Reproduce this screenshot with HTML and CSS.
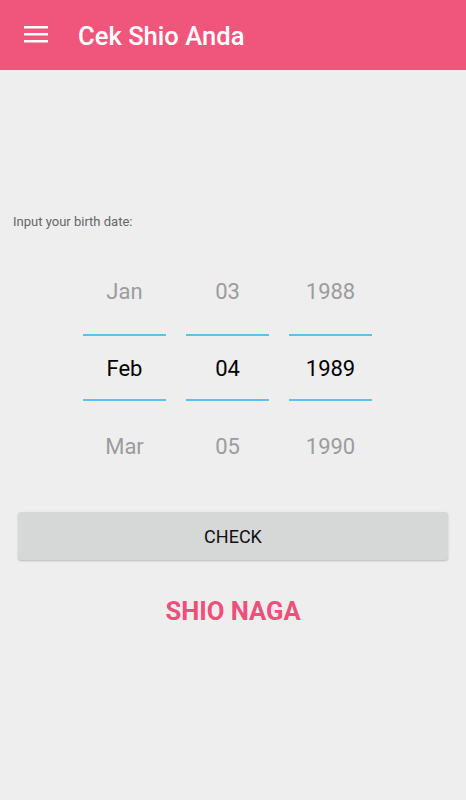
FILE: index.html
```html
<!DOCTYPE html>
<html>
<head>
<meta charset="utf-8">
<link rel="stylesheet" href="styles.css">
</head>
<body>
<header class="appbar">
  <svg class="menu" width="24" height="24" viewBox="0 0 24 24"><rect x="0" y="3" width="24" height="2.5" fill="#fff"/><rect x="0" y="10" width="24" height="2.5" fill="#fff"/><rect x="0" y="17" width="24" height="2.5" fill="#fff"/></svg>
  <h1 class="title">Cek Shio Anda</h1>
</header>
<main class="content">
  <p class="label">Input your birth date:</p>
  <div class="pickers">
    <div class="picker">
      <div class="item top faded">Jan</div>
      <div class="item mid">Feb</div>
      <div class="item bot faded">Mar</div>
    </div>
    <div class="picker">
      <div class="item top faded">03</div>
      <div class="item mid">04</div>
      <div class="item bot faded">05</div>
    </div>
    <div class="picker">
      <div class="item top faded">1988</div>
      <div class="item mid">1989</div>
      <div class="item bot faded">1990</div>
    </div>
  </div>
  <button class="check">CHECK</button>
  <p class="result">SHIO NAGA</p>
</main>
</body>
</html>
```
FILE: styles.css
```css
html, body {
  margin: 0;
  padding: 0;
  background: #eeeeee;
  font-family: Roboto, "Noto Sans", sans-serif;
  height: 100%;
}
.appbar {
  height: 70px;
  background: #f0557b;
  display: flex;
  align-items: center;
  padding-left: 24px;
  box-sizing: border-box;
}
.menu {
  display: block;
}
.title {
  margin: 0 0 0 30px;
  color: #fff;
  font-size: 25.6px;
  font-weight: 500;
  line-height: 30px;
  padding-top: 1px;
}
.content {
  display: flex;
  flex-direction: column;
}
.label {
  margin: 144px 0 0 13px;
  font-size: 13px;
  line-height: 16px;
  color: #666666;
}
.pickers {
  margin-top: 18px;
  display: flex;
  gap: 20px;
  padding-left: 83px;
}
.picker {
  width: 83px;
  display: flex;
  flex-direction: column;
}
.item {
  display: flex;
  align-items: center;
  justify-content: center;
  font-size: 22px;
  color: #000;
}
.item.faded {
  color: #9c9c9c;
}
.item.top {
  height: 86px;
  border-bottom: 2px solid #5ec1ea;
}
.item.mid {
  height: 63px;
  padding-top: 1px;
  box-sizing: border-box;
}
.item.bot {
  height: 90px;
  border-top: 2px solid #5ec1ea;
}
.check {
  margin: 21px 18px 0 18px;
  height: 48px;
  border: none;
  border-radius: 3px;
  background: #d6d7d7;
  box-shadow: 0 1px 2px rgba(0,0,0,0.22);
  font-family: Roboto, "Noto Sans", sans-serif;
  font-size: 18px;
  color: #111;
  padding: 0;
}
.result {
  margin: 36px 0 0 0;
  text-align: center;
  font-size: 25.6px;
  line-height: 30px;
  font-weight: 700;
  color: #ef4f7b;
}
```
